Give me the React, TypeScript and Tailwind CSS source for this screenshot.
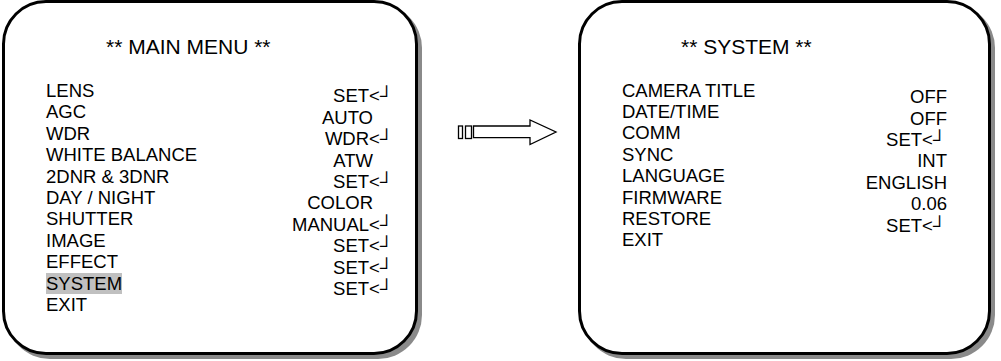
const mainItems = [
  "LENS",
  "AGC",
  "WDR",
  "WHITE BALANCE",
  "2DNR & 3DNR",
  "DAY / NIGHT",
  "SHUTTER",
  "IMAGE",
  "EFFECT",
  "SYSTEM",
  "EXIT",
];

const mainValues = [
  { text: "SET", enter: true },
  { text: "AUTO" },
  { text: "WDR", enter: true },
  { text: "ATW" },
  { text: "SET", enter: true },
  { text: "COLOR" },
  { text: "MANUAL", enter: true },
  { text: "SET", enter: true },
  { text: "SET", enter: true },
  { text: "SET", enter: true },
];

const systemItems = [
  "CAMERA TITLE",
  "DATE/TIME",
  "COMM",
  "SYNC",
  "LANGUAGE",
  "FIRMWARE",
  "RESTORE",
  "EXIT",
];

const systemValues = [
  { text: "OFF" },
  { text: "OFF" },
  { text: "SET", enter: true },
  { text: "INT" },
  { text: "ENGLISH" },
  { text: "0.06" },
  { text: "SET", enter: true },
];

type Value = { text: string; enter?: boolean };

function Enter() {
  return <span>&lt;┘</span>;
}

function ArrowRight() {
  return (
    <svg width="105" height="30" viewBox="0 0 105 30" className="mt-[118px] ml-[37px]">
      <rect x="3.5" y="8" width="4" height="12.5" fill="white" stroke="black" strokeWidth="1.3" />
      <rect x="10.5" y="8" width="6" height="12.5" fill="white" stroke="black" strokeWidth="1.3" />
      <path
        d="M18.5 8 H75 V2 L101 14 L75 26.5 V19.7 H18.5 Z"
        fill="white"
        stroke="black"
        strokeWidth="1.3"
        strokeLinejoin="miter"
      />
    </svg>
  );
}

export default function App() {
  return (
    <div className="flex h-[361px] w-[1001px] bg-white pl-[2px] font-['Liberation_Sans',Arial,sans-serif] text-black">
      {/* Main menu */}
      <div className="h-[355px] w-[416px] shrink-0 rounded-[44px] border-[3px] border-black bg-white shadow-[4px_4px_0_#8a8a8a]">
        <div className="mt-[32px] pl-[101px] text-[21px] leading-[24px]">** MAIN MENU **</div>
        <div className="mt-[21px] flex justify-between text-[18.5px] leading-[21.4px]">
          <div className="pl-[41px]">
            {mainItems.map((item) => (
              <div key={item}>
                {item === "SYSTEM" ? <span className="bg-[#c0c0c0]">{item}</span> : item}
              </div>
            ))}
          </div>
          <div className="mt-[5.3px] pr-[22px] text-right">
            {mainValues.map((v: Value, i) => (
              <div key={i} className={v.enter ? "" : "pr-[20px]"}>
                {v.text}
                {v.enter && <Enter />}
              </div>
            ))}
          </div>
        </div>
      </div>

      <div className="w-[160px] shrink-0">
        <ArrowRight />
      </div>

      {/* System submenu */}
      <div className="h-[355px] w-[413px] shrink-0 rounded-[44px] border-[3px] border-black bg-white shadow-[4px_4px_0_#8a8a8a]">
        <div className="mt-[32px] pl-[100px] text-[21px] leading-[24px]">** SYSTEM **</div>
        <div className="mt-[20.5px] flex justify-between text-[18.5px] leading-[21.4px]">
          <div className="pl-[41px]">
            {systemItems.map((item) => (
              <div key={item}>{item}</div>
            ))}
          </div>
          <div className="mt-[6.7px] pr-[41px] text-right">
            {systemValues.map((v: Value, i) => (
              <div key={i} className={v.enter ? "pr-[1px]" : ""}>
                {v.text}
                {v.enter && <Enter />}
              </div>
            ))}
          </div>
        </div>
      </div>
    </div>
  );
}
